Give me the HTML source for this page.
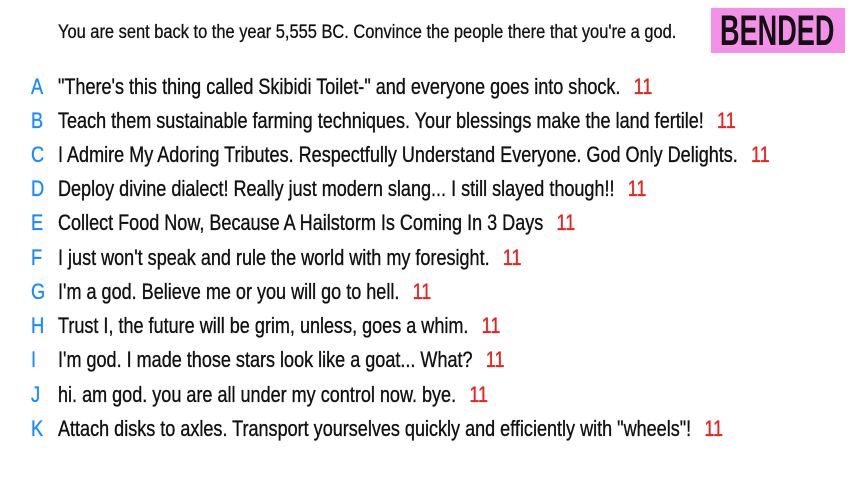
<!DOCTYPE html>
<html><head><meta charset="utf-8"><style>
body{margin:0;width:853px;height:480px;background:#fff;position:relative;overflow:hidden;font-family:"Liberation Sans",sans-serif;color:#111}
.h{position:absolute;left:58px;top:22px;font-size:19px;white-space:nowrap;transform:scaleX(0.865);transform-origin:0 50%;-webkit-text-stroke:0.3px #111}
.b{position:absolute;left:711px;top:8px;width:134px;height:45px;background:#f590e8;overflow:hidden}
.b span{position:absolute;left:9px;top:-2px;font-size:43px;font-weight:bold;line-height:50px;color:#111;transform:scaleX(0.63);transform-origin:0 50%;white-space:nowrap}
.r{position:absolute;left:0;height:30px;font-size:22px;white-space:nowrap;line-height:30px;-webkit-text-stroke:0.35px currentColor}
.l{position:absolute;left:31px;color:#1a8cff;transform:scaleX(0.83);transform-origin:0 50%}
.t{position:absolute;left:58px;transform:scaleX(0.82);transform-origin:0 50%}
.n{color:#e8231f;margin-left:10px}
</style></head><body>
<div class="h">You are sent back to the year 5,555 BC. Convince the people there that you're a god.</div>
<div class="b"><span>BENDED</span></div>
<div class="r" style="top:72px"><span class="l">A</span><span class="t">"There's this thing called Skibidi Toilet-" and everyone goes into shock. <span class="n">11</span></span></div>
<div class="r" style="top:106px"><span class="l">B</span><span class="t">Teach them sustainable farming techniques. Your blessings make the land fertile! <span class="n">11</span></span></div>
<div class="r" style="top:140px"><span class="l">C</span><span class="t">I Admire My Adoring Tributes. Respectfully Understand Everyone. God Only Delights. <span class="n">11</span></span></div>
<div class="r" style="top:174px"><span class="l">D</span><span class="t">Deploy divine dialect! Really just modern slang... I still slayed though!! <span class="n">11</span></span></div>
<div class="r" style="top:208px"><span class="l">E</span><span class="t">Collect Food Now, Because A Hailstorm Is Coming In 3 Days <span class="n">11</span></span></div>
<div class="r" style="top:243px"><span class="l">F</span><span class="t">I just won't speak and rule the world with my foresight. <span class="n">11</span></span></div>
<div class="r" style="top:277px"><span class="l">G</span><span class="t">I'm a god. Believe me or you will go to hell. <span class="n">11</span></span></div>
<div class="r" style="top:311px"><span class="l">H</span><span class="t">Trust I, the future will be grim, unless, goes a whim. <span class="n">11</span></span></div>
<div class="r" style="top:345px"><span class="l">I</span><span class="t">I'm god. I made those stars look like a goat... What? <span class="n">11</span></span></div>
<div class="r" style="top:380px"><span class="l">J</span><span class="t">hi. am god. you are all under my control now. bye. <span class="n">11</span></span></div>
<div class="r" style="top:414px"><span class="l">K</span><span class="t">Attach disks to axles. Transport yourselves quickly and efficiently with "wheels"! <span class="n">11</span></span></div>
</body></html>
